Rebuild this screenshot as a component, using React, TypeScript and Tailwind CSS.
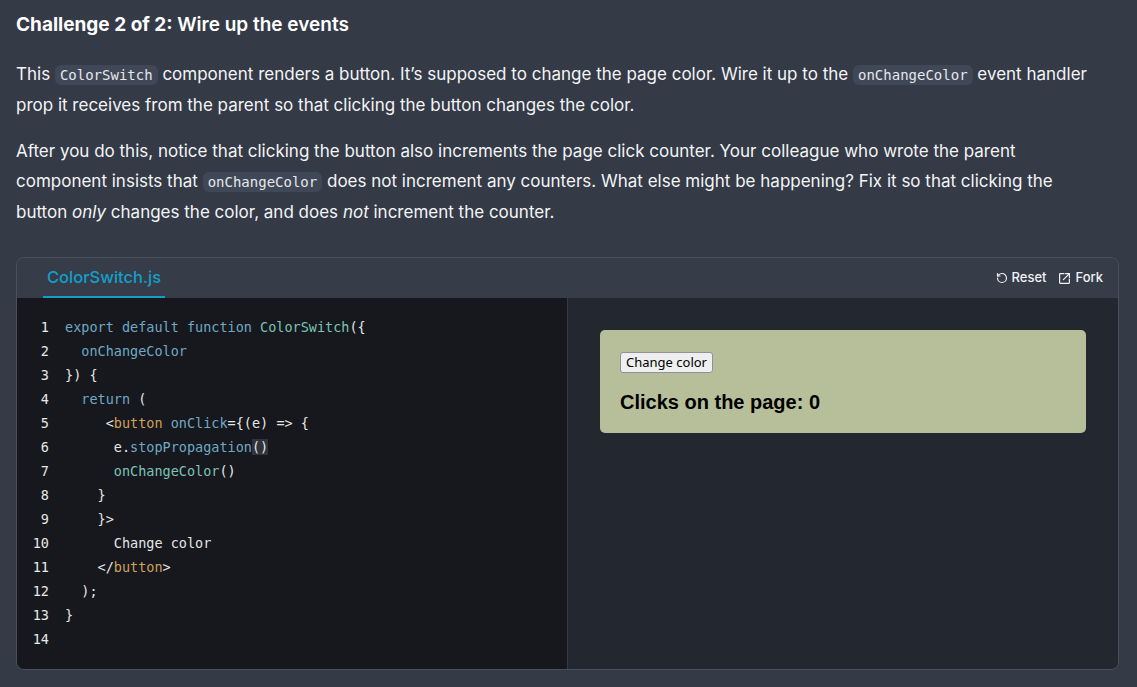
import React from "react";

const mono = "font-['DejaVu_Sans_Mono','Liberation_Mono',monospace]";

const InlineCode = ({ children }: { children: React.ReactNode }) => (
  <code className={`${mono} text-[14px] bg-[#404756] text-[#e4e7ec] rounded-md px-[5px] py-[2px]`}>
    {children}
  </code>
);

type Tok = [string, string?];

// react.dev dark syntax colours
const kw = "text-[#6fa9c6]";
const def = "text-[#7cc4b6]";
const tag = "text-[#d2a05a]";
const plain = "text-[#e6e6e6]";

const lines: Tok[][] = [
  [["export default function ", kw], ["ColorSwitch", def], ["({", plain]],
  [["  "], ["onChangeColor", kw]],
  [["}) {", plain]],
  [["  "], ["return", kw], [" (", plain]],
  [["     "], ["<", plain], ["button", tag], [" "], ["onClick", kw], ["={(e) => {", plain]],
  [["      "], ["e.", plain], ["stopPropagation", kw], ["()", "match"]],
  [["      "], ["onChangeColor", def], ["()", plain]],
  [["    "], ["}", plain]],
  [["    "], ["}>", plain]],
  [["      "], ["Change color", plain]],
  [["    "], ["</", plain], ["button", tag], [">", plain]],
  [["  "], [");", plain]],
  [["}", plain]],
  [[""]],
];

const ResetIcon = () => (
  <svg width="12" height="12" viewBox="0 0 24 24" fill="none" stroke="currentColor" strokeWidth="2.4" strokeLinecap="round" strokeLinejoin="round">
    <path d="M3 12a9 9 0 1 0 9-9 9.75 9.75 0 0 0-6.74 2.74L3 8" />
    <path d="M3 3v5h5" />
  </svg>
);

const ForkIcon = () => (
  <svg width="13" height="13" viewBox="0 0 24 24" fill="none" stroke="currentColor" strokeWidth="2.2" strokeLinecap="round" strokeLinejoin="round">
    <path d="M11 3H4a1 1 0 0 0-1 1v16a1 1 0 0 0 1 1h16a1 1 0 0 0 1-1v-7" />
    <path d="M14 3h7v7" />
    <path d="M21 3 10 14" />
  </svg>
);

export default function App() {
  return (
    <div className="min-h-[687px] bg-[#343a46] px-4 pt-[13px] text-[#f3f4f6] font-['Inter','Noto_Sans',sans-serif]">
      <h3 className="text-[19px] leading-[24px] font-bold text-white">
        Challenge 2 of 2: <span className="font-semibold">Wire up the events</span>
      </h3>

      <p className="mt-[22px] text-[17px] leading-[30px] w-[1110px]">
        This <InlineCode>ColorSwitch</InlineCode> component renders a button. It’s supposed to change the page color. Wire it up to the{" "}
        <InlineCode>onChangeColor</InlineCode> event handler
        <br />
        prop it receives from the parent so that clicking the button changes the color.
      </p>
      <p className="mt-4 text-[17px] leading-[30px] w-[1110px]">
        After you do this, notice that clicking the button also increments the page click counter. Your colleague who wrote the parent
        <br />
        component insists that <InlineCode>onChangeColor</InlineCode> does not increment any counters. What else might be happening? Fix it so that clicking the
        <br />
        button <em>only</em> changes the color, and does <em>not</em> increment the counter.
      </p>

      <div className="mt-[30px] w-[1103px] h-[413px] rounded-lg border border-[#4a505d] overflow-hidden flex flex-col">
        <div className="h-[40px] shrink-0 bg-[#363c48] flex items-center justify-between pl-[26px] pr-[15px]">
          <div className="h-full flex items-end">
            <div className="h-full flex items-center px-1 border-b-2 border-[#149eca] text-[#149eca] text-[16.5px] font-medium">
              ColorSwitch.js
            </div>
          </div>
          <div className="flex items-center gap-3 text-[13px] font-medium text-[#f0f2f5]">
            <button className="flex items-center gap-1">
              <ResetIcon />
              Reset
            </button>
            <button className="flex items-center gap-1">
              <ForkIcon />
              Fork
            </button>
          </div>
        </div>

        <div className="flex flex-1 min-h-0">
          <div className="w-[551px] bg-[#16181d] border-r border-[#343a46] pt-[17px]">
            {lines.map((toks, i) => (
              <div key={i} className={`flex h-6 items-center ${mono} text-[13.5px]`}>
                <span className="w-[32px] text-right text-[#e8e8e8] shrink-0">{i + 1}</span>
                <span className="pl-[16px] whitespace-pre">
                  {toks.map(([t, c], j) =>
                    c === "match" ? (
                      <span key={j} className="bg-[#2f333b] text-[#e6e6e6]">{t}</span>
                    ) : (
                      <span key={j} className={c ?? plain}>{t}</span>
                    )
                  )}
                </span>
              </div>
            ))}
          </div>

          <div className="flex-1 bg-[#23272f] px-8 pt-8">
            <div className="h-[103px] bg-[#b7bf9a] rounded-[5px] px-5 pt-[20px] text-black font-['Liberation_Sans',Arial,sans-serif]">
              <button className="h-[21px] px-[5px] bg-[#efefef] border border-[#8f8f9d] rounded-[3px] text-[13px] leading-none text-black font-['Noto_Sans','Open_Sans',sans-serif]">
                Change color
              </button>
              <h1 className="mt-[16px] text-[20px] font-bold leading-[24px]">Clicks on the page: 0</h1>
            </div>
          </div>
        </div>
      </div>
    </div>
  );
}
